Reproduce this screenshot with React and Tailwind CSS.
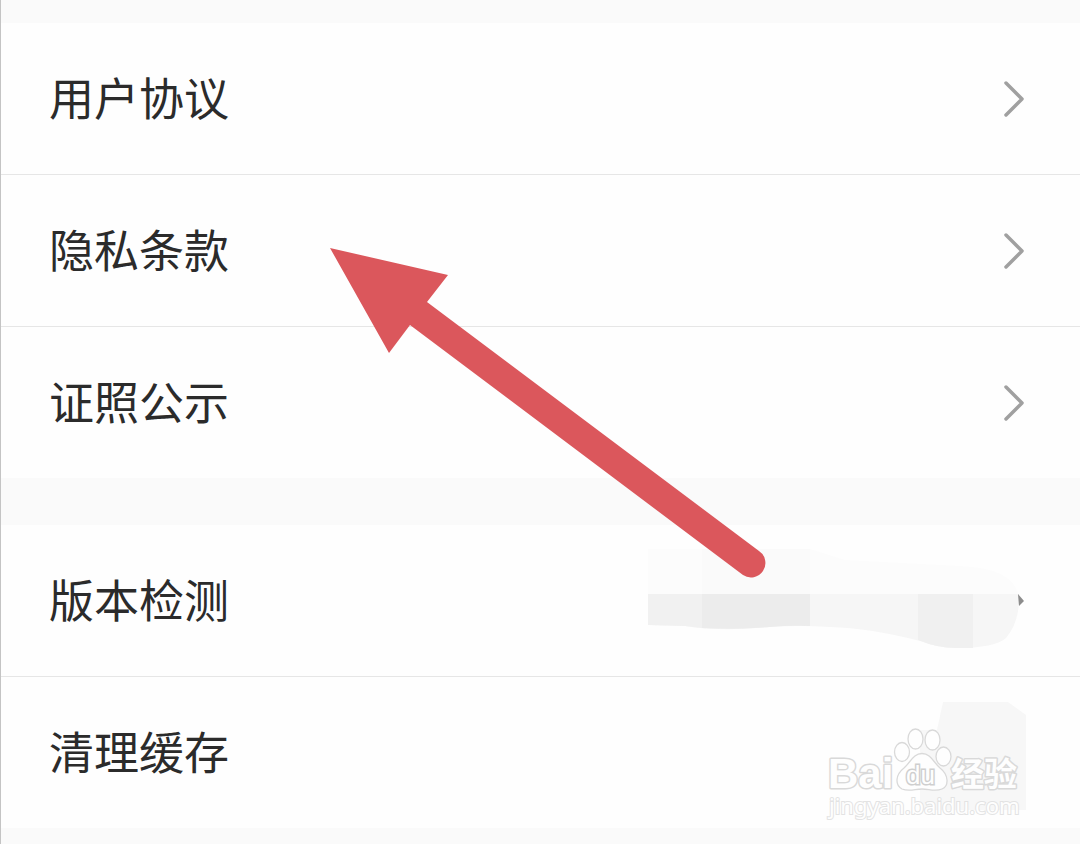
function Chevron() {
  return (
    <svg width="24" height="40" viewBox="0 0 24 40" fill="none" aria-hidden="true">
      <path d="M4 4 L20 20 L4 36" stroke="#a0a0a0" strokeWidth="3.5" strokeLinecap="round" strokeLinejoin="round" />
    </svg>
  );
}

function Row({ label, chevron, children }) {
  return (
    <li className="relative">
      <button type="button" className="flex h-[151px] w-full items-center justify-between pr-[54px] pl-12 text-left">
        <span className="pb-1 text-[45px] leading-[60px] text-[#2b2b2b]">{label}</span>
        {chevron && <Chevron />}
      </button>
      {children}
    </li>
  );
}

function VersionSmudge() {
  return (
    <svg className="pointer-events-none absolute top-0 right-0" width="450" height="150" viewBox="630 525 450 150" aria-hidden="true">
      <path d="M648 549 H810 L845 560 L960 566 Q1012 568 1018 594 H648Z" fill="#fcfcfc" />
      <path d="M702 549 H810 V594 H702Z" fill="#fafafa" />
      <path d="M648 594 H1019 Q1020 622 1006 638 Q996 648 955 648 Q938 648 920 641 Q870 628 830 627 Q800 625 770 627 Q720 632 685 626 L648 625Z" fill="#f6f6f6" />
      <path d="M648 594 H702 V628 L685 626 L648 625Z" fill="#f1f1f1" />
      <path d="M702 594 H810 V626 Q790 625 770 627 Q730 630 702 628Z" fill="#ececec" />
      <path d="M918 594 H973 V648 H955 Q938 648 918 640Z" fill="#f0f0f0" />
      <path d="M1018 594 L1024 601 L1019 606Z" fill="#8c8c8c" />
    </svg>
  );
}

function Watermark() {
  return (
    <svg className="pointer-events-none absolute top-0 right-0" width="280" height="150" viewBox="800 677 280 150" role="img" aria-label="Baidu 经验">
      <path d="M943 702 H1008 L1026 715 V810 H920 V730 H937Z" fill="#f7f7f7" />
      <g fill="#fefefe" stroke="#d9d9d9" strokeWidth="1.3">
        <g strokeWidth="3" paintOrder="stroke" strokeLinejoin="round">
          <text x="828" y="788" fontSize="42" fontWeight="700" fontFamily="'Liberation Sans', sans-serif">Bai</text>
          <text x="951" y="786" fontSize="33" fontWeight="700" fontFamily="'Noto Sans CJK SC', sans-serif">经验</text>
        </g>
        <ellipse cx="902" cy="752" rx="7.5" ry="9.5" />
        <ellipse cx="915.5" cy="739" rx="7.5" ry="10" />
        <ellipse cx="932.5" cy="740" rx="7.5" ry="10" />
        <ellipse cx="943.5" cy="756.5" rx="7.5" ry="9.5" />
        <path d="M922 753.500 C931 753.500 933 762 940 768 C949 775 949 786 942 789 C935 792 929 789 922 789 C915 789 909 792 902 789 C895 785 895 775 904 768 C911 762 913 753.500 922 753.500Z" />
        <text x="906" y="784" fontSize="26" fontFamily="'Liberation Sans', sans-serif" strokeWidth="3" stroke="#cfcfcf" paintOrder="stroke">du</text>
        <text x="829" y="814" fontSize="22" fontFamily="'Noto Sans', sans-serif" strokeWidth="2" stroke="#e3e3e3" paintOrder="stroke">jingyan.baidu.com</text>
      </g>
    </svg>
  );
}

function Pointer() {
  return (
    <svg className="pointer-events-none absolute top-[244px] left-[325px]" width="444" height="338" viewBox="326 244 444 338" aria-hidden="true">
      <path d="M330 248 L448 275 L427 302 L759 551 A14 14 0 0 1 743 575 L410 325 L389 353Z" fill="#db575c" />
    </svg>
  );
}

export default function App() {
  return (
    <main lang="zh-CN" className="relative min-h-screen overflow-hidden border-l border-[#c4c4c4] bg-[#fafafa] pt-[23px] font-['Noto_Sans_CJK_SC',sans-serif]">
      <ul className="divide-y divide-[#e6e6e6] bg-[#fefefe]">
        <Row label="用户协议" chevron />
        <Row label="隐私条款" chevron />
        <Row label="证照公示" chevron />
      </ul>
      <ul className="mt-[47px] divide-y divide-[#e6e6e6] bg-[#fefefe]">
        <Row label="版本检测">
          <VersionSmudge />
        </Row>
        <Row label="清理缓存">
          <Watermark />
        </Row>
      </ul>
      <Pointer />
    </main>
  );
}
